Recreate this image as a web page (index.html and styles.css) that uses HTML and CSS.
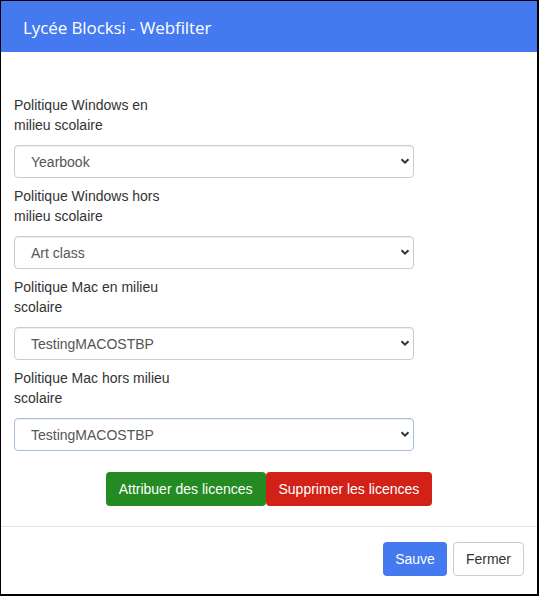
FILE: index.html
```html
<!DOCTYPE html>
<html lang="fr">
<head>
<meta charset="utf-8">
<title>Lycée Blocksi - Webfilter</title>
<link rel="stylesheet" href="styles.css">
</head>
<body>
<div class="modal">
  <div class="modal-header">
    <h4 class="modal-title">Lycée Blocksi - Webfilter</h4>
  </div>
  <div class="modal-body">
    <div class="form-group">
      <label class="label">Politique Windows en milieu scolaire</label>
      <div class="select-wrap">
        <select class="select"><option>Yearbook</option></select>
        <svg class="chev" width="10" height="8" viewBox="0 0 10 8"><path d="M1.5 2.2 L5 5.6 L8.5 2.2" fill="none" stroke="#333" stroke-width="2"/></svg>
      </div>
    </div>
    <div class="form-group">
      <label class="label">Politique Windows hors milieu scolaire</label>
      <div class="select-wrap">
        <select class="select"><option>Art class</option></select>
        <svg class="chev" width="10" height="8" viewBox="0 0 10 8"><path d="M1.5 2.2 L5 5.6 L8.5 2.2" fill="none" stroke="#333" stroke-width="2"/></svg>
      </div>
    </div>
    <div class="form-group">
      <label class="label">Politique Mac en milieu scolaire</label>
      <div class="select-wrap">
        <select class="select"><option>TestingMACOSTBP</option></select>
        <svg class="chev" width="10" height="8" viewBox="0 0 10 8"><path d="M1.5 2.2 L5 5.6 L8.5 2.2" fill="none" stroke="#333" stroke-width="2"/></svg>
      </div>
    </div>
    <div class="form-group">
      <label class="label">Politique Mac hors milieu scolaire</label>
      <div class="select-wrap">
        <select class="select focus"><option>TestingMACOSTBP</option></select>
        <svg class="chev" width="10" height="8" viewBox="0 0 10 8"><path d="M1.5 2.2 L5 5.6 L8.5 2.2" fill="none" stroke="#333" stroke-width="2"/></svg>
      </div>
    </div>
    <div class="actions">
      <button class="btn btn-green">Attribuer des licences</button>
      <button class="btn btn-red">Supprimer les licences</button>
    </div>
  </div>
  <div class="modal-footer">
    <button class="btn btn-blue">Sauve</button>
    <button class="btn btn-default">Fermer</button>
  </div>
</div>
</body>
</html>
```
FILE: styles.css
```css
* { box-sizing: border-box; }
html, body { margin: 0; padding: 0; background: #fff; }
body { font-family: "Liberation Sans", Arial, sans-serif; font-size: 14px; color: #333; }

.modal {
  width: 539px;
  height: 596px;
  border-top: 1px solid #000;
  border-left: 1px solid #000;
  border-right: 2px solid #000;
  border-bottom: 2px solid #000;
  display: flex;
  flex-direction: column;
}

.modal-header {
  background: #4479ef;
  height: 51px;
  padding: 0 22px;
  display: flex;
  align-items: center;
}
.modal-title {
  margin: 0;
  margin-top: 1px;
  color: #fff;
  font-family: "Open Sans", "Noto Sans", sans-serif;
  font-weight: 500;
  font-size: 17px;
  letter-spacing: -0.1px;
}

.modal-body {
  padding: 43px 13px 20px 13px;
  border-bottom: 1px solid #e5e5e5;
}

.form-group { margin-bottom: 8px; }

.label {
  display: block;
  width: 160px;
  line-height: 20px;
  margin-bottom: 10px;
  color: #333;
}

.select-wrap {
  position: relative;
  width: 400px;
}
.select {
  appearance: none;
  -webkit-appearance: none;
  display: block;
  width: 100%;
  height: 33px;
  padding: 0 16px;
  border: 1px solid #ccc;
  border-radius: 4px;
  background: #fff;
  font-family: "Liberation Sans", Arial, sans-serif;
  font-size: 14px;
  color: #555;
  box-shadow: inset 0 1px 1px rgba(0,0,0,0.075);
}
.select.focus { border-color: #a9bfd9; }
.chev {
  position: absolute;
  right: 4px;
  top: 12px;
  pointer-events: none;
}

.actions {
  margin-top: 21px;
  display: flex;
  justify-content: center;
}

.btn {
  height: 34px;
  padding: 0 12px;
  border: 1px solid transparent;
  border-radius: 4px;
  font-family: "Liberation Sans", Arial, sans-serif;
  font-size: 14px;
  line-height: 1;
  cursor: pointer;
}
.btn-green { background: #238b22; color: #fff; }
.btn-red { background: #d22116; color: #fff; padding: 0 12px; }
.btn-blue { background: #4479ef; color: #fff; padding: 0 11px; }
.btn-default { background: #fff; color: #333; border-color: #ccc; }

.modal-footer {
  flex: 1;
  padding: 15px 13px 0 0;
  display: flex;
  justify-content: flex-end;
  align-items: flex-start;
  gap: 6px;
}
```
